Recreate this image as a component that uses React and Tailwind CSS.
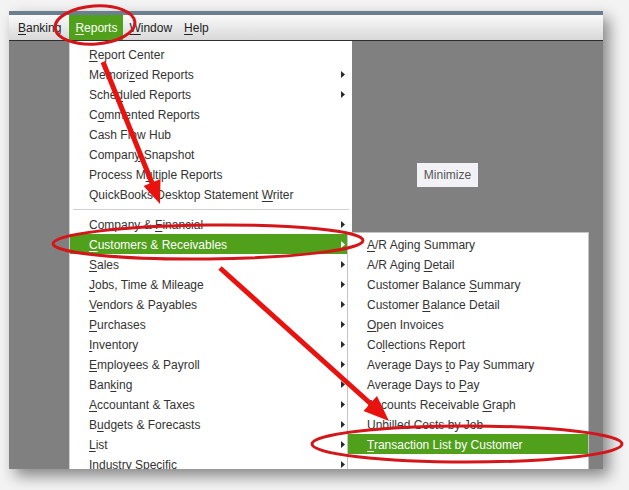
import React from 'react';

const FONT = { fontFamily: '"Liberation Sans", Arial, sans-serif' };

const reportsItems = [
  { label: 'Report Center', u: 0 },
  { label: 'Memorized Reports', u: 6, sub: true },
  { label: 'Scheduled Reports', u: 4, sub: true },
  { label: 'Commented Reports', u: 1 },
  { label: 'Cash Flow Hub', u: -1 },
  { label: 'Company Snapshot', u: 6 },
  { label: 'Process Multiple Reports', u: 9 },
  { label: 'QuickBooks Desktop Statement Writer', u: 29 },
  'sep',
  { label: 'Company & Financial', u: 10, sub: true },
  { label: 'Customers & Receivables', u: 0, sub: true, active: true },
  { label: 'Sales', u: 0, sub: true },
  { label: 'Jobs, Time & Mileage', u: 0, sub: true },
  { label: 'Vendors & Payables', u: 0, sub: true },
  { label: 'Purchases', u: 0, sub: true },
  { label: 'Inventory', u: 0, sub: true },
  { label: 'Employees & Payroll', u: 0, sub: true },
  { label: 'Banking', u: 3, sub: true },
  { label: 'Accountant & Taxes', u: 0, sub: true },
  { label: 'Budgets & Forecasts', u: 1, sub: true },
  { label: 'List', u: 0, sub: true },
  { label: 'Industry Specific', u: -1, sub: true },
];

const customerItems = [
  { label: 'A/R Aging Summary', u: 0 },
  { label: 'A/R Aging Detail', u: 10 },
  { label: 'Customer Balance Summary', u: 17 },
  { label: 'Customer Balance Detail', u: 9 },
  { label: 'Open Invoices', u: 0 },
  { label: 'Collections Report', u: 2 },
  { label: 'Average Days to Pay Summary', u: 13 },
  { label: 'Average Days to Pay', u: 16 },
  { label: 'Accounts Receivable Graph', u: 20 },
  { label: 'Unbilled Costs by Job', u: -1 },
  { label: 'Transaction List by Customer', u: 0, active: true },
];

// label with the accelerator letter underlined
function Accel({ label, u }) {
  if (u < 0) return <span>{label}</span>;
  return (
    <span>
      {label.slice(0, u)}
      <span className="underline underline-offset-2">{label[u]}</span>
      {label.slice(u + 1)}
    </span>
  );
}

function SubArrow({ light }) {
  return (
    <svg width="4" height="7" viewBox="0 0 4 7" className="shrink-0">
      <path d="M0 0L4 3.5L0 7Z" fill={light ? '#ffffff' : '#2a2a2a'} />
    </svg>
  );
}

function MenuRow({ item }) {
  return (
    <div
      className={`flex items-center h-[20px] pl-[19px] pr-[2px] text-[12px] leading-[20px] ${
        item.active ? 'bg-[#50a01c] text-white' : 'text-[#333]'
      }`}
    >
      <span className="flex-1 whitespace-nowrap pt-px">
        <Accel label={item.label} u={item.u} />
      </span>
      {item.sub && <SubArrow light={item.active} />}
    </div>
  );
}

function MenuBarItem({ label, active }) {
  return (
    <div
      className={`h-full flex items-center px-[6px] text-[12px] ${
        active ? 'bg-[#50a01c] text-white' : 'text-[#222]'
      }`}
    >
      <Accel label={label} u={0} />
    </div>
  );
}

function Annotations() {
  return (
    <svg className="absolute inset-0 pointer-events-none" width="629" height="490" viewBox="0 0 629 490">
      <g fill="none" stroke="#d4161a" strokeWidth="3">
        <ellipse cx="95" cy="25" rx="40" ry="19" transform="rotate(-4 95 25)" />
        <ellipse cx="208" cy="242" rx="155" ry="17" transform="rotate(-0.6 208 242)" />
        <ellipse cx="467" cy="444" rx="155" ry="18" />
      </g>
      <g stroke="#e8120e" strokeWidth="5" strokeLinecap="butt">
        <line x1="103" y1="62" x2="152" y2="183" />
        <line x1="220" y1="268" x2="371" y2="404" />
      </g>
      <g fill="#e8120e">
        <polygon points="160,204 143.5,186 160.5,179" />
        <polygon points="389,421 363.5,411 377,396" />
      </g>
    </svg>
  );
}

export default function App() {
  return (
    <div className="relative w-[629px] h-[490px] overflow-hidden bg-[#f3f3f3] pt-[11px] pl-[9px]" style={FONT}>
      <div className="w-[594px] h-[458px] flex flex-col shadow-[6px_7px_14px_rgba(0,0,0,0.45)]">
        <div className="h-[4px] bg-[#6b7f8f]" />
        <div className="h-[26px] flex items-stretch pl-[3px] bg-gradient-to-b from-[#fafafa] to-[#d8d8d8] border-b border-[#2e2e2e]">
          <MenuBarItem label="Banking" />
          <div className="w-[2px]" />
          <MenuBarItem label="Reports" active />
          <MenuBarItem label="Window" />
          <MenuBarItem label="Help" />
        </div>
        <div className="relative flex-1 bg-[#808080] overflow-hidden">
          <button className="absolute left-[408px] top-[122px] w-[61px] h-[24px] bg-[#f1f1f6] text-[#555] text-[12px]">
            Minimize
          </button>

          <div className="absolute left-[60px] top-0 w-[283px] bg-white border-l border-[#cfcfcf] pt-[3px] pb-[6px]">
            {reportsItems.map((item, i) =>
              item === 'sep' ? (
                <div key={i} className="h-[10px] flex items-center pl-[3px] pr-[3px]">
                  <div className="h-px w-full bg-[#d0d0d0]" />
                </div>
              ) : (
                <div key={i} className="mr-[5px]">
                  <MenuRow item={item} />
                </div>
              )
            )}
          </div>

          <div className="absolute left-[338px] top-[191px] w-[242px] bg-white border border-[#c4c4c4] pt-[1px] pb-[20px]">
            {customerItems.map((item, i) => (
              <MenuRow key={i} item={item} />
            ))}
          </div>
        </div>
      </div>
      <Annotations />
    </div>
  );
}
